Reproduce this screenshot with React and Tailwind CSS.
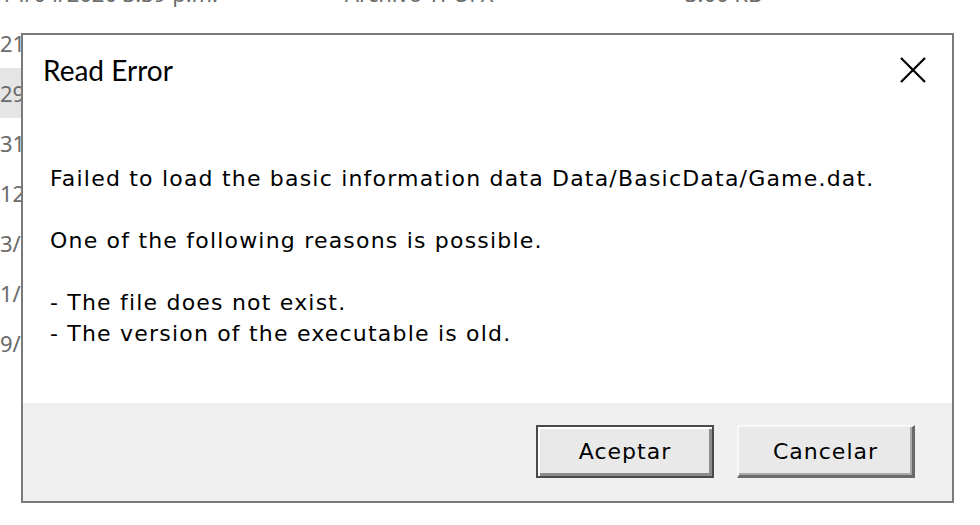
import React from 'react';

const rows = [
  { date: '14/04/2020 3:39 p.m.', type: 'Archivo TPUFX', size: '3.00 KB' },
  { date: '21/04/2020 3:39 p.m.', type: 'Archivo TPUEX', size: '5.00 KB' },
  { date: '29/04/2020', selected: true },
  { date: '31/03/2020' },
  { date: '12/04/2020' },
  { date: '3/04/2020' },
  { date: '1/04/2020' },
  { date: '9/04/2020' },
];

const FileList = () => (
  <div className="flex flex-col -mt-[32px] font-['Noto_Sans',sans-serif] text-[22px] text-[#6b6b6b]">
    {rows.map((r, i) => (
      <div
        key={i}
        className={`flex items-center h-[50px] w-[940px] ${r.selected ? 'bg-[#e5e5e5]' : ''}`}
      >
        {r.type ? (
          <>
            <span className="w-[345px] whitespace-nowrap">{r.date}</span>
            <span className="w-[340px] whitespace-nowrap">{r.type}</span>
            <span className="whitespace-nowrap">{r.size}</span>
          </>
        ) : (
          <span className="w-[21px] overflow-hidden whitespace-nowrap">{r.date}</span>
        )}
      </div>
    ))}
  </div>
);

const DialogButton = ({ children, isDefault }) => (
  <button
    className={
      isDefault
        ? 'w-[178px] h-[53px] bg-[#e9e9e9] border-2 border-[#4a4a4a] shadow-[inset_2px_2px_0_#ffffff,inset_-3px_-3px_0_#8c8c8c] text-[22px] tracking-[1px] text-black'
        : 'w-[178px] h-[53px] bg-[#e9e9e9] border-t-2 border-l-2 border-r-[3px] border-b-[3px] border-t-[#f8f8f8] border-l-[#f8f8f8] border-r-[#6a6a6a] border-b-[#6a6a6a] shadow-[inset_-2px_-2px_0_#a9a9a9] text-[22px] tracking-[1px] text-black'
    }
  >
    {children}
  </button>
);

const ReadErrorDialog = () => (
  <div className="absolute left-[21px] top-[33px] w-[933px] h-[470px] flex flex-col bg-white border-2 border-[#7a7a7a]">
    <div className="flex items-center justify-between h-[70px] pl-[20px] pr-[26px]">
      <span className="font-['Lato',sans-serif] text-[28px] text-black">Read Error</span>
      <svg width="26" height="26" viewBox="0 0 26 26" className="text-black">
        <path d="M1 1 L25 25 M25 1 L1 25" stroke="currentColor" strokeWidth="2.2" fill="none" />
      </svg>
    </div>
    <div className="flex-1 pl-[27px] pt-[58px] font-['DejaVu_Sans',sans-serif] text-[22px] tracking-[1.2px] leading-[31px] text-black whitespace-pre">
      {'Failed to load the basic information data Data/BasicData/Game.dat.\n\nOne of the following reasons is possible.\n\n- The file does not exist.\n- The version of the executable is old.'}
    </div>
    <div className="h-[98px] bg-[#f0f0f0] flex items-start justify-end gap-[23px] pt-[22px] pr-[37px] font-['DejaVu_Sans',sans-serif]">
      <DialogButton isDefault>Aceptar</DialogButton>
      <DialogButton>Cancelar</DialogButton>
    </div>
  </div>
);

export default function App() {
  return (
    <div className="relative w-[980px] h-[525px] overflow-hidden bg-white">
      <FileList />
      <ReadErrorDialog />
    </div>
  );
}
